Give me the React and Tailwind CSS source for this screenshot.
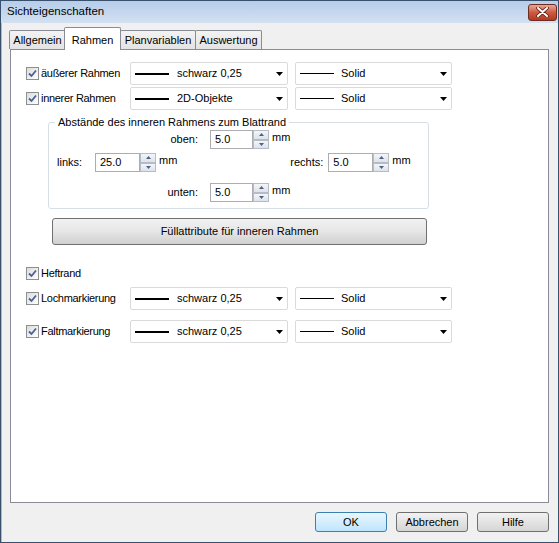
import React from 'react'

// Vista-artiger Dialog "Sichteigenschaften"

function Checkbox() {
  return (
    <span className="flex items-center justify-center w-[13px] h-[13px] border border-[#8e8f8f] bg-gradient-to-br from-[#dcdcdc] to-white shrink-0">
      <svg width="9" height="9" viewBox="0 0 9 9">
        <path d="M1 4.5 L3.5 7 L8 1.5" fill="none" stroke="#4a5f97" strokeWidth="1.8" />
      </svg>
    </span>
  )
}

function Arrow() {
  return (
    <svg width="7" height="4" viewBox="0 0 7 4" className="shrink-0">
      <path d="M0 0 H7 L3.5 4 Z" fill="#000" />
    </svg>
  )
}

function LineCombo({ text, thick, w, tx }) {
  return (
    <div className={`flex items-center h-full ${w} bg-white border border-[#dadada] rounded-[2px] pl-[4px] pr-[4px]`}>
      <span className={`w-[34px] ${thick ? 'h-[2px]' : 'h-px'} bg-black shrink-0`}></span>
      <span className={`${tx} flex-1`}>{text}</span>
      <Arrow />
    </div>
  )
}

function ComboRow({ label, left, right, className = '' }) {
  return (
    <div className={`flex items-center h-[23px] pl-[15px] ${className}`}>
      <div className="flex items-center w-[104px]">
        <Checkbox />
        <span className="ml-[2px] tracking-[-0.3px]">{label}</span>
      </div>
      <LineCombo text={left} thick w="w-[158px]" tx="ml-[8px]" />
      <div className="w-[7px]"></div>
      <LineCombo text={right} w="w-[157px]" tx="ml-[7px]" />
    </div>
  )
}

function SpinArrow({ up }) {
  return (
    <div className="flex-1 flex items-center justify-center bg-gradient-to-b from-[#f4f6f8] to-[#dde3ea] border border-[#b4bcc8]">
      <svg width="5" height="3" viewBox="0 0 5 3">
        <path d={up ? 'M0 3 H5 L2.5 0 Z' : 'M0 0 H5 L2.5 3 Z'} fill="#4d6185" />
      </svg>
    </div>
  )
}

function Spin({ value, w = 'w-[44px]' }) {
  return (
    <div className="flex h-[19px]">
      <div className={`${w} h-full bg-white border border-[#abadb3] pl-[4px] flex items-center text-[11px]`}>
        {value}
      </div>
      <div className="w-[16px] h-full flex flex-col">
        <SpinArrow up />
        <SpinArrow />
      </div>
      <span className="ml-[3px] self-start leading-[14px]">mm</span>
    </div>
  )
}

function Tab({ label, active, className = '' }) {
  if (active) {
    return (
      <div className={`h-[23px] bg-white border border-b-0 border-[#898c95] rounded-t-[2px] flex items-start justify-center pt-[4px] ${className}`}>
        {label}
      </div>
    )
  }
  return (
    <div className={`h-[19px] mb-[1px] bg-gradient-to-b from-[#f3f3f3] to-[#e3e3e3] border border-b-0 border-[#898c95] rounded-t-[2px] flex items-center justify-center ${className}`}>
      {label}
    </div>
  )
}

function DlgButton({ label, primary }) {
  return (
    <button
      className={`w-[72px] h-[20px] rounded-[3px] border text-[11px] ${
        primary
          ? 'border-[#3c7fb1] bg-gradient-to-b from-[#eaf6fd] to-[#bee6fd]'
          : 'border-[#707070] bg-gradient-to-b from-[#f2f2f2] to-[#d5d5d5]'
      }`}
    >
      {label}
    </button>
  )
}

export default function App() {
  return (
    <div className="w-[559px] h-[543px] flex flex-col bg-[#f0f0f0] border border-[#39506c] font-['Liberation_Sans',Arial,sans-serif] text-[11px] text-black overflow-hidden">
      {/* Titelleiste */}
      <div className="h-[22px] flex items-center pl-[6px] pr-[1px] bg-gradient-to-b from-[#b7cdea] to-[#d3e0f1] shrink-0">
        <span className="text-[11.5px]">Sichteigenschaften</span>
        <div className="ml-auto w-[29px] h-[17px] rounded-[3px] border border-[#6e2c20] bg-gradient-to-b from-[#e7a796] via-[#cc5a43] to-[#b33a22] flex items-center justify-center">
          <svg width="13" height="10" viewBox="0 0 13 10">
            <path d="M2 1 L11 9 M11 1 L2 9" stroke="#5a1e14" strokeWidth="3.6" strokeLinecap="round" />
            <path d="M2 1 L11 9 M11 1 L2 9" stroke="#fff" strokeWidth="2" strokeLinecap="round" />
          </svg>
        </div>
      </div>

      {/* Inhalt */}
      <div className="flex-1 flex flex-col pl-[8px] pr-[9px] pt-[4px] border-l-[1px] border-[#9fbde0]">
        {/* Tabs */}
        <div className="flex items-end h-[23px] -mb-px relative z-10 -ml-px">
          <Tab label="Allgemein" className="w-[57px]" />
          <Tab label="Rahmen" active className="w-[57px] -ml-[2px]" />
          <Tab label="Planvariablen" className="w-[76px] -ml-px" />
          <Tab label="Auswertung" className="w-[67px] -ml-px" />
        </div>

        {/* Panel */}
        <div className="h-[454px] bg-white border border-[#898c95] pt-[12px] flex flex-col">
          <ComboRow label="äußerer Rahmen" left="schwarz 0,25" right="Solid" />
          <ComboRow label="innerer Rahmen" left="2D-Objekte" right="Solid" className="mt-[2px]" />

          <fieldset className="ml-[37px] mt-[6px] w-[381px] h-[93px] border border-[#d5dfe5] rounded-[3px] px-0">
            <legend className="ml-[6px] px-[3px] leading-[13px]">Abstände des inneren Rahmens zum Blattrand</legend>
            <div className="flex items-center mt-[1px]">
              <span className="w-[149px] text-right">oben:</span>
              <div className="ml-[12px]"><Spin value="5.0" w="w-[43px]" /></div>
            </div>
            <div className="flex items-center mt-[4px]">
              <span className="w-[46px] pl-[8px]">links:</span>
              <Spin value="25.0" w="w-[45px]" />
              <span className="w-[146px] text-right">rechts:</span>
              <div className="ml-[5px]"><Spin value="5.0" w="w-[45px]" /></div>
            </div>
            <div className="flex items-center mt-[11px]">
              <span className="w-[149px] text-right">unten:</span>
              <div className="ml-[12px]"><Spin value="5.0" w="w-[43px]" /></div>
            </div>
          </fieldset>

          <button className="ml-[41px] mt-[9px] w-[375px] h-[27px] rounded-[3px] border border-[#707070] bg-gradient-to-b from-[#f2f2f2] via-[#e6e6e6] to-[#d0d0d0] text-[11px]">
            Füllattribute für inneren Rahmen
          </button>

          <div className="flex items-center h-[23px] pl-[15px] mt-[17px]">
            <Checkbox />
            <span className="ml-[2px] tracking-[-0.3px]">Heftrand</span>
          </div>
          <ComboRow label="Lochmarkierung" left="schwarz 0,25" right="Solid" className="mt-[2px]" />
          <ComboRow label="Faltmarkierung" left="schwarz 0,25" right="Solid" className="mt-[10px]" />
        </div>

        {/* Schaltflächen */}
        <div className="flex justify-end gap-[9px] mt-[9px] pr-0">
          <DlgButton label="OK" primary />
          <DlgButton label="Abbrechen" />
          <DlgButton label="Hilfe" />
        </div>
      </div>
    </div>
  )
}
